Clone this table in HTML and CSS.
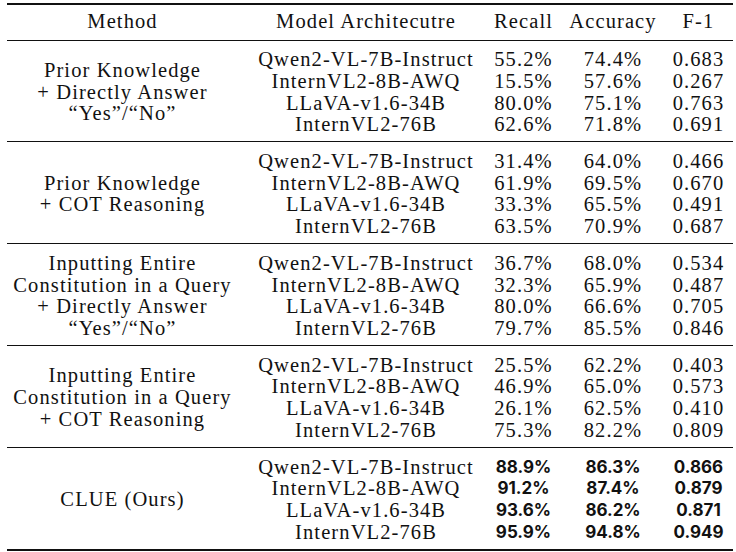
FILE: index.html
```html
<!DOCTYPE html>
<html>
<head>
<meta charset="utf-8">
<link rel="stylesheet" href="styles.css">
</head>
<body>
<div class="table">
  <div class="grid head">
    <div class="cell">Method</div>
    <div class="cell">Model Architecutre</div>
    <div class="cell">Recall</div>
    <div class="cell">Accuracy</div>
    <div class="cell">F-1</div>
  </div>

  <div class="grid group">
    <div class="method">Prior Knowledge<br>+ Directly Answer<br>“Yes”/“No”</div>
    <div class="cell">Qwen2-VL-7B-Instruct</div><div class="cell">55.2%</div><div class="cell">74.4%</div><div class="cell">0.683</div>
    <div class="cell">InternVL2-8B-AWQ</div><div class="cell">15.5%</div><div class="cell">57.6%</div><div class="cell">0.267</div>
    <div class="cell">LLaVA-v1.6-34B</div><div class="cell">80.0%</div><div class="cell">75.1%</div><div class="cell">0.763</div>
    <div class="cell">InternVL2-76B</div><div class="cell">62.6%</div><div class="cell">71.8%</div><div class="cell">0.691</div>
  </div>

  <div class="grid group">
    <div class="method">Prior Knowledge<br>+ COT Reasoning</div>
    <div class="cell">Qwen2-VL-7B-Instruct</div><div class="cell">31.4%</div><div class="cell">64.0%</div><div class="cell">0.466</div>
    <div class="cell">InternVL2-8B-AWQ</div><div class="cell">61.9%</div><div class="cell">69.5%</div><div class="cell">0.670</div>
    <div class="cell">LLaVA-v1.6-34B</div><div class="cell">33.3%</div><div class="cell">65.5%</div><div class="cell">0.491</div>
    <div class="cell">InternVL2-76B</div><div class="cell">63.5%</div><div class="cell">70.9%</div><div class="cell">0.687</div>
  </div>

  <div class="grid group">
    <div class="method">Inputting Entire<br>Constitution in a Query<br>+ Directly Answer<br>“Yes”/“No”</div>
    <div class="cell">Qwen2-VL-7B-Instruct</div><div class="cell">36.7%</div><div class="cell">68.0%</div><div class="cell">0.534</div>
    <div class="cell">InternVL2-8B-AWQ</div><div class="cell">32.3%</div><div class="cell">65.9%</div><div class="cell">0.487</div>
    <div class="cell">LLaVA-v1.6-34B</div><div class="cell">80.0%</div><div class="cell">66.6%</div><div class="cell">0.705</div>
    <div class="cell">InternVL2-76B</div><div class="cell">79.7%</div><div class="cell">85.5%</div><div class="cell">0.846</div>
  </div>

  <div class="grid group">
    <div class="method">Inputting Entire<br>Constitution in a Query<br>+ COT Reasoning</div>
    <div class="cell">Qwen2-VL-7B-Instruct</div><div class="cell">25.5%</div><div class="cell">62.2%</div><div class="cell">0.403</div>
    <div class="cell">InternVL2-8B-AWQ</div><div class="cell">46.9%</div><div class="cell">65.0%</div><div class="cell">0.573</div>
    <div class="cell">LLaVA-v1.6-34B</div><div class="cell">26.1%</div><div class="cell">62.5%</div><div class="cell">0.410</div>
    <div class="cell">InternVL2-76B</div><div class="cell">75.3%</div><div class="cell">82.2%</div><div class="cell">0.809</div>
  </div>

  <div class="grid group">
    <div class="method">CLUE (Ours)</div>
    <div class="cell">Qwen2-VL-7B-Instruct</div><div class="cell best">88.9%</div><div class="cell best">86.3%</div><div class="cell best">0.866</div>
    <div class="cell">InternVL2-8B-AWQ</div><div class="cell best">91.2%</div><div class="cell best">87.4%</div><div class="cell best">0.879</div>
    <div class="cell">LLaVA-v1.6-34B</div><div class="cell best">93.6%</div><div class="cell best">86.2%</div><div class="cell best">0.871</div>
    <div class="cell">InternVL2-76B</div><div class="cell best">95.9%</div><div class="cell best">94.8%</div><div class="cell best">0.949</div>
  </div>
</div>
</body>
</html>
```

FILE: styles.css
```css
html, body {
  margin: 0;
  padding: 0;
  background: #ffffff;
}

body {
  font-family: "Liberation Serif", "Times New Roman", serif;
  font-size: 20.5px;
  letter-spacing: 1.1px;
  color: #111111;
}

.table {
  width: 726px;
  margin: 3px 0 0 7px;
  border-top: 2px solid #111111;
  border-bottom: 2px solid #111111;
}

.grid {
  display: grid;
  grid-template-columns: 231px 256px 59px 120px 51px;
  padding-right: 9px;
  line-height: 21.7px;
}

.head {
  padding-top: 6px;
  padding-bottom: 6.8px;
  border-bottom: 1px solid #111111;
}

.group {
  grid-template-rows: repeat(4, 21.7px);
  padding-top: 8.7px;
  padding-bottom: 5.4px;
}

.group + .group {
  border-top: 1px solid #111111;
}

.cell {
  justify-self: center;
  white-space: nowrap;
}

.method {
  grid-column: 1;
  grid-row: 1 / span 4;
  align-self: center;
  justify-self: center;
  text-align: center;
  white-space: nowrap;
}

.best {
  font-family: Inter, "Open Sans", sans-serif;
  font-weight: 700;
  font-size: 17px;
  letter-spacing: 0;
}
```
